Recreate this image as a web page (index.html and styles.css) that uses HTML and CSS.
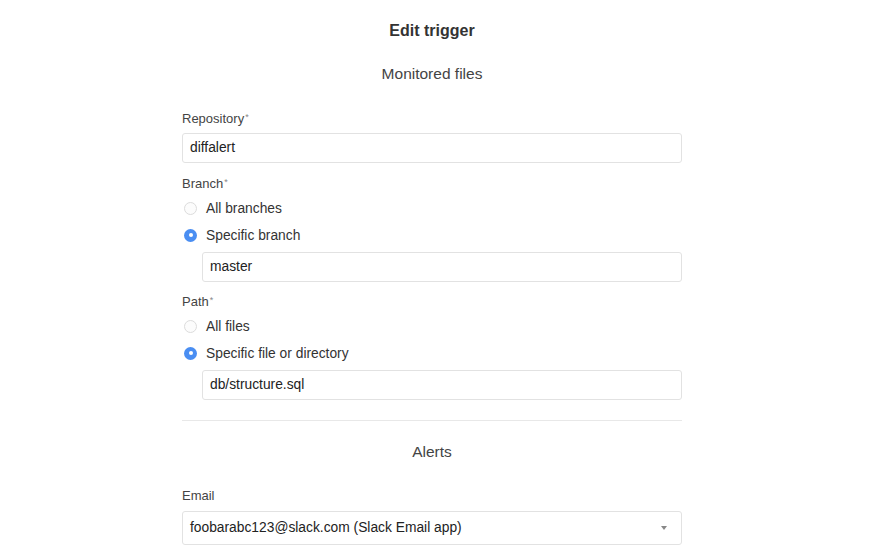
FILE: index.html
```html
<!DOCTYPE html>
<html>
<head>
<meta charset="utf-8">
<link rel="stylesheet" href="styles.css">
</head>
<body>
<main class="page">
  <h1 class="title">Edit trigger</h1>
  <h2 class="section-title">Monitored files</h2>

  <div class="field first">
    <label class="label">Repository<span class="req">*</span></label>
    <div class="input">diffalert</div>
  </div>

  <div class="field">
    <label class="label">Branch<span class="req">*</span></label>
    <div class="radio"><span class="dot"></span>All branches</div>
    <div class="radio"><span class="dot on"></span>Specific branch</div>
    <div class="input indent">master</div>
  </div>

  <div class="field">
    <label class="label">Path<span class="req">*</span></label>
    <div class="radio"><span class="dot"></span>All files</div>
    <div class="radio"><span class="dot on"></span>Specific file or directory</div>
    <div class="input indent">db/structure.sql</div>
  </div>

  <hr class="divider">

  <h2 class="section-title alerts">Alerts</h2>

  <div class="field last">
    <label class="label">Email</label>
    <div class="input select">
      <span>foobarabc123@slack.com (Slack Email app)</span>
      <span class="caret"></span>
    </div>
  </div>
</main>
</body>
</html>
```

FILE: styles.css
```css
html, body {
  margin: 0;
  padding: 0;
  background: #ffffff;
}
body {
  font-family: "Liberation Sans", Arial, sans-serif;
  color: #333333;
  padding-right: 16px;
}
.page {
  width: 500px;
  margin: 0 auto;
  display: flex;
  flex-direction: column;
}
.title {
  margin: 21px 0 0;
  font-size: 16px;
  font-weight: bold;
  line-height: 20px;
  text-align: center;
  color: #333;
}
.section-title {
  margin: 23px 0 0;
  font-size: 15.5px;
  font-weight: normal;
  line-height: 20px;
  text-align: center;
  color: #444;
}
.field {
  display: flex;
  flex-direction: column;
}
.field.first { margin-top: 25px; }
.label {
  font-size: 13px;
  line-height: 16px;
  color: #444;
  margin-bottom: 6px;
}
.req {
  font-size: 9px;
  vertical-align: 3px;
  color: #888;
  margin-left: 1px;
}
.input {
  box-sizing: border-box;
  height: 30px;
  border: 1px solid #e2e2e2;
  border-radius: 3px;
  padding: 0 7px;
  font-size: 13.8px;
  line-height: 28px;
  color: #222;
  margin-bottom: 11px;
}
.input.indent {
  margin-left: 20px;
  margin-bottom: 10px;
}
.radio {
  display: flex;
  align-items: center;
  height: 20px;
  font-size: 13.8px;
  color: #333;
  margin-bottom: 7px;
}
.dot {
  box-sizing: border-box;
  width: 13px;
  height: 13px;
  border-radius: 50%;
  border: 1px solid #dcdcdc;
  background: #fcfcfc;
  margin: 0 9px 0 2px;
  position: relative;
}
.dot.on {
  border: none;
  background: #4a8ef2;
}
.dot.on::after {
  content: "";
  position: absolute;
  left: 4.5px;
  top: 4.5px;
  width: 4px;
  height: 4px;
  border-radius: 50%;
  background: #fff;
}
.divider {
  width: 500px;
  margin: 10px 0 0;
  border: none;
  border-top: 1px solid #e8e8e8;
}
.alerts { margin-top: 21px; }
.field.last { margin-top: 26px; }
.field.last .label { margin-bottom: 7px; }
.select {
  height: 34px;
  line-height: 32px;
  display: flex;
  justify-content: space-between;
  align-items: center;
  padding-right: 14px;
}
.caret {
  width: 0;
  height: 0;
  border-left: 3.5px solid transparent;
  border-right: 3.5px solid transparent;
  border-top: 4px solid #888;
}
```
